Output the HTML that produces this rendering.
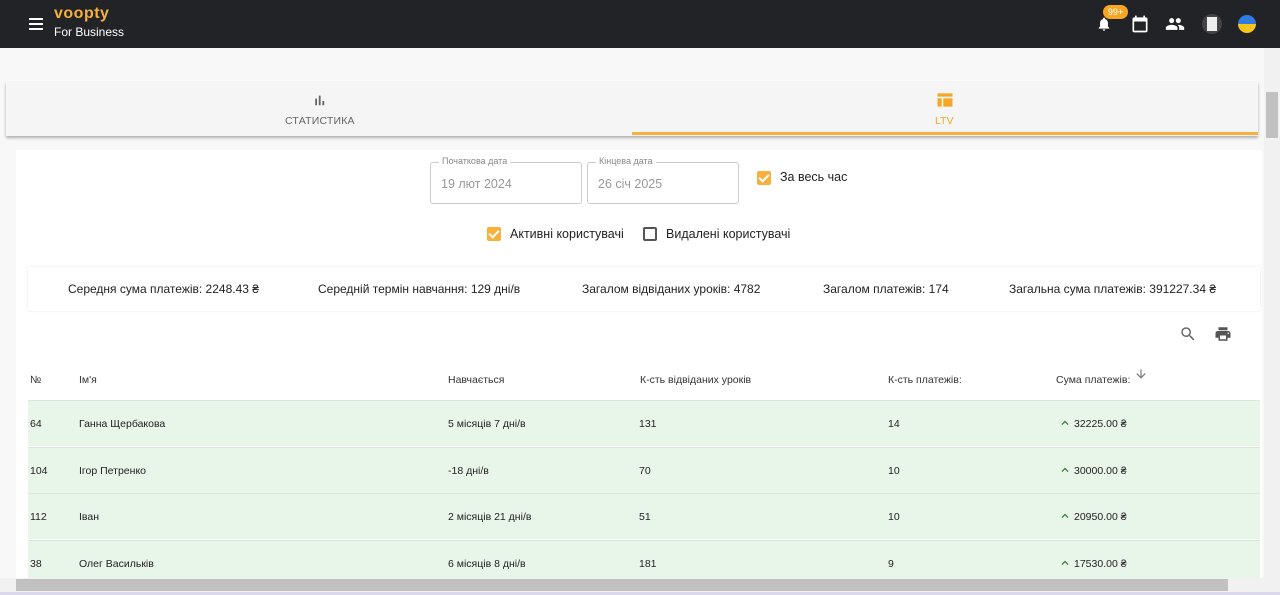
<!DOCTYPE html>
<html><head><meta charset="utf-8"><style>
*{box-sizing:border-box;margin:0;padding:0}
body{width:1280px;height:595px;overflow:hidden;background:#f8f8f8;font-family:"Liberation Sans",sans-serif;position:relative;color:#222}
.hdr{position:absolute;left:0;top:0;width:1280px;height:48px;background:#222326}
.abs{position:absolute}
.tabs{position:absolute;left:6px;top:82px;width:1252px;height:54px;background:#f5f5f5;box-shadow:0 2px 3px rgba(0,0,0,.3)}
.card{position:absolute;left:16px;top:150px;width:1246px;height:440px;background:#fff}
.field{position:absolute;height:42px;border:1px solid #ccc;border-radius:3px;width:152px}
.field span{position:absolute;top:-7px;left:8px;background:#fff;padding:0 3px;font-size:9px;color:#888}
.field div{position:absolute;left:10px;top:14px;font-size:12.5px;color:#999}
.cb{position:absolute;width:14px;height:14px;border-radius:2px}
.on{background:#f6b03b}
.on::after{content:"";position:absolute;left:4px;top:1px;width:4px;height:8px;border:solid #fff;border-width:0 2px 2px 0;transform:rotate(45deg)}
.off{border:2px solid #555}
.lbl{position:absolute;font-size:12.5px;color:#222}
.stats{position:absolute;left:28px;top:267px;width:1232px;height:44px;background:#fff;box-shadow:0 0 2px rgba(0,0,0,.12);font-size:12px}
.stats span{position:absolute;top:15px}
.th{position:absolute;top:374px;font-size:10.5px;color:#333}
.row{position:absolute;left:28px;width:1232px;height:46px;background:#e8f5e9;border-top:1px solid #d9e6da;font-size:10.5px}
.row span{position:absolute;top:17px}
.row svg{position:absolute;left:1030px;top:15px}
</style></head><body>
<div class="hdr">
 <div class="abs" style="left:29px;top:18px;width:14px;height:2px;background:#fff;box-shadow:0 5px 0 #fff,0 10px 0 #fff"></div>
 <div class="abs" style="left:54px;top:5px;font-size:16px;font-weight:bold;color:#f6b03b;letter-spacing:.5px">voopty</div>
 <div class="abs" style="left:54px;top:25px;font-size:12px;color:#fff">For Business</div>
 <svg class="abs" style="left:1096px;top:16px" width="16" height="16" viewBox="0 0 24 24"><path fill="#fff" d="M12 22c1.1 0 2-.9 2-2h-4a2 2 0 002 2zm6-6v-5c0-3.07-1.64-5.64-4.5-6.32V4a1.5 1.5 0 00-3 0v.68C7.63 5.36 6 7.92 6 11v5l-2 2v1h16v-1l-2-2z"/></svg>
 <div class="abs" style="left:1103px;top:5px;width:25px;height:14px;border-radius:7px;background:#f6a623;color:#fff;font-size:9px;text-align:center;line-height:14px">99+</div>
 <svg class="abs" style="left:1130px;top:14px" width="20" height="20" viewBox="0 0 24 24"><path fill="#fff" d="M19 4h-1V2h-2v2H8V2H6v2H5a2 2 0 00-2 2v14a2 2 0 002 2h14a2 2 0 002-2V6a2 2 0 00-2-2zm0 16H5V9h14v11z"/></svg>
 <svg class="abs" style="left:1165px;top:14px" width="20" height="20" viewBox="0 0 24 24"><path fill="#fff" d="M16 11c1.66 0 2.99-1.34 2.99-3S17.66 5 16 5s-3 1.34-3 3 1.34 3 3 3zm-8 0c1.66 0 2.99-1.34 2.99-3S9.66 5 8 5 5 6.34 5 8s1.34 3 3 3zm0 2c-2.33 0-7 1.17-7 3.5V19h14v-2.5C15 14.17 10.33 13 8 13zm8 0c-.29 0-.62.02-.97.05 1.16.84 1.97 1.97 1.97 3.45V19h6v-2.5c0-2.33-4.67-3.5-7-3.5z"/></svg>
 <div class="abs" style="left:1202px;top:14px;width:20px;height:20px;border-radius:50%;background:#444"></div>
 <div class="abs" style="left:1207px;top:17px;width:10px;height:14px;background:#eee"></div>
 <div class="abs" style="left:1238px;top:15px;width:18px;height:18px;border-radius:50%;background:linear-gradient(#2f7be0 50%,#f7c51c 50%)"></div>
</div>
<div class="abs" style="left:1264px;top:48px;width:16px;height:530px;background:#f1f1f1"></div>
<div class="abs" style="left:1266px;top:92px;width:12px;height:46px;background:#c1c1c1"></div>
<div class="tabs">
 <svg class="abs" style="left:305px;top:10px" width="16" height="16" viewBox="0 0 24 24"><path fill="#666" d="M5 9h3v11H5zm6-5h3v16h-3zm6 9h3v7h-3z" transform="scale(.9) translate(2 2)"/></svg>
 <div class="abs" style="left:279px;top:33px;font-size:10.5px;color:#666;letter-spacing:.2px">СТАТИСТИКА</div>
 <svg class="abs" style="left:929px;top:8px" width="20" height="20" viewBox="0 0 24 24"><path fill="#f6a623" d="M3 4h18v4H3zm0 6h5v10H3zm7 0h11v10H10z"/></svg>
 <div class="abs" style="left:929px;top:33px;font-size:10.5px;color:#f6a623">LTV</div>
 <div class="abs" style="left:626px;top:50px;width:626px;height:3px;background:#f6b03b"></div>
</div>
<div class="card"></div>
<div class="field" style="left:430px;top:162px"><span>Початкова дата</span><div>19 лют 2024</div></div>
<div class="field" style="left:587px;top:162px"><span>Кінцева дата</span><div>26 січ 2025</div></div>
<div class="cb on" style="left:757px;top:171px"></div><div class="lbl" style="left:780px;top:170px">За весь час</div>
<div class="cb on" style="left:487px;top:227px"></div><div class="lbl" style="left:510px;top:227px">Активні користувачі</div>
<div class="cb off" style="left:643px;top:227px"></div><div class="lbl" style="left:666px;top:227px">Видалені користувачі</div>
<div class="stats">
 <span style="left:40px">Середня сума платежів: 2248.43 ₴</span>
 <span style="left:290px">Середній термін навчання: 129 дні/в</span>
 <span style="left:554px">Загалом відвіданих уроків: 4782</span>
 <span style="left:795px">Загалом платежів: 174</span>
 <span style="left:981px">Загальна сума платежів: 391227.34 ₴</span>
</div>
<svg class="abs" style="left:1179px;top:325px" width="18" height="18" viewBox="0 0 24 24"><path fill="#666" d="M15.5 14h-.79l-.28-.27A6.47 6.47 0 0016 9.5 6.5 6.5 0 109.5 16c1.61 0 3.09-.59 4.23-1.57l.27.28v.79l5 4.99L20.49 19l-4.99-5zm-6 0C7.01 14 5 11.99 5 9.5S7.01 5 9.5 5 14 7.01 14 9.5 11.99 14 9.5 14z"/></svg>
<svg class="abs" style="left:1214px;top:325px" width="18" height="18" viewBox="0 0 24 24"><path fill="#555" d="M19 8H5c-1.66 0-3 1.34-3 3v6h4v4h12v-4h4v-6c0-1.66-1.34-3-3-3zm-3 11H8v-5h8v5zm3-7a1 1 0 110-2 1 1 0 010 2zm-1-9H6v4h12V3z"/></svg>
<div class="th" style="left:30px">№</div><div class="th" style="left:79px">Ім'я</div><div class="th" style="left:448px">Навчається</div><div class="th" style="left:640px">К-сть відвіданих уроків</div><div class="th" style="left:888px">К-сть платежів:</div><div class="th" style="left:1056px">Сума платежів:</div>
<svg class="abs" style="left:1134px;top:367px" width="14" height="14" viewBox="0 0 24 24"><path fill="#777" d="M20 12l-1.41-1.41L13 16.17V4h-2v12.17l-5.58-5.59L4 12l8 8 8-8z"/></svg>
<div class="row" style="top:400px"><span style="left:2px">64</span><span style="left:51px">Ганна Щербакова</span><span style="left:420px">5 місяців 7 дні/в</span><span style="left:611px">131</span><span style="left:860px">14</span><svg width="14" height="14" viewBox="0 0 24 24"><path fill="#2e7d32" d="M7.41 15.41L12 10.83l4.59 4.58L18 14l-6-6-6 6z"/></svg><span style="left:1046px">32225.00 ₴</span></div>
<div class="row" style="top:447px"><span style="left:2px">104</span><span style="left:51px">Ігор Петренко</span><span style="left:420px">-18 дні/в</span><span style="left:611px">70</span><span style="left:860px">10</span><svg width="14" height="14" viewBox="0 0 24 24"><path fill="#2e7d32" d="M7.41 15.41L12 10.83l4.59 4.58L18 14l-6-6-6 6z"/></svg><span style="left:1046px">30000.00 ₴</span></div>
<div class="row" style="top:493px"><span style="left:2px">112</span><span style="left:51px">Іван</span><span style="left:420px">2 місяців 21 дні/в</span><span style="left:611px">51</span><span style="left:860px">10</span><svg width="14" height="14" viewBox="0 0 24 24"><path fill="#2e7d32" d="M7.41 15.41L12 10.83l4.59 4.58L18 14l-6-6-6 6z"/></svg><span style="left:1046px">20950.00 ₴</span></div>
<div class="row" style="top:540px;height:40px"><span style="left:2px">38</span><span style="left:51px">Олег Васильків</span><span style="left:420px">6 місяців 8 дні/в</span><span style="left:611px">181</span><span style="left:860px">9</span><svg width="14" height="14" viewBox="0 0 24 24"><path fill="#2e7d32" d="M7.41 15.41L12 10.83l4.59 4.58L18 14l-6-6-6 6z"/></svg><span style="left:1046px">17530.00 ₴</span></div>
<div class="abs" style="left:0;top:578px;width:1264px;height:14px;background:#f1f1f1"></div>
<div class="abs" style="left:16px;top:579px;width:1212px;height:12px;background:#c1c1c1"></div>
<div class="abs" style="left:1264px;top:578px;width:16px;height:14px;background:#f1f1f1"></div>
<div class="abs" style="left:0;top:592px;width:1280px;height:3px;background:#dcd8ec"></div>
</body></html>
